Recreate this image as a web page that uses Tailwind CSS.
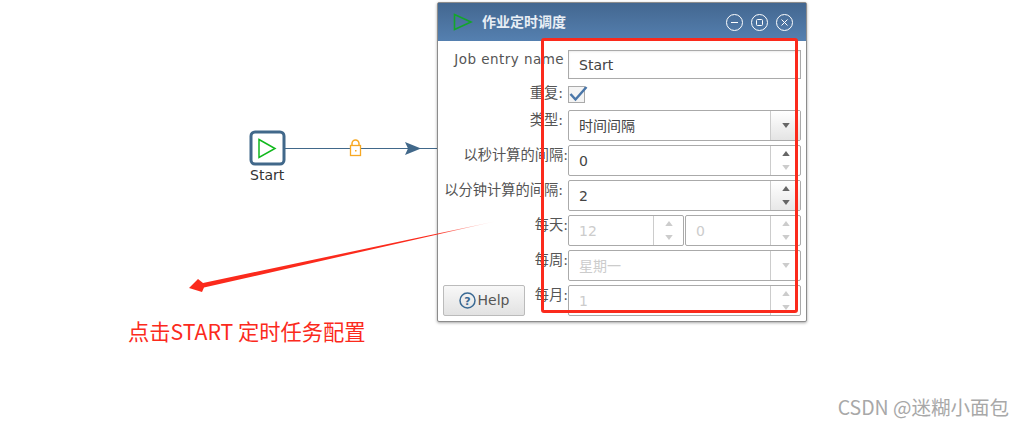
<!DOCTYPE html>
<html lang="en">
<head>
  <meta charset="UTF-8">
  <title>Job schedule</title>
  <script src="https://cdn.jsdelivr.net/npm/@tailwindcss/browser@4"></script>
</head>
<body class="bg-white overflow-hidden">
  <div class="relative w-[1024px] h-[426px] overflow-hidden font-['DejaVu_Sans','Noto_Sans_CJK_SC',sans-serif]">

    <!-- Canvas: start node and hop -->
    <svg class="absolute left-0 top-0" width="1024" height="426" viewBox="0 0 1024 426" fill="none">
      <rect x="251" y="132" width="33" height="32" rx="4" fill="#fff" stroke="#41688a" stroke-width="3"/>
      <path d="M259 139.500 L275 148.500 L259 157.500 Z" stroke="#10b81c" stroke-width="1.500" stroke-linejoin="miter"/>
      <line x1="285" y1="148.500" x2="438" y2="148.500" stroke="#41688a"/>
      <path d="M405 142 L421 148.500 L405 155 L408 148.500 Z" fill="#41688a"/>
      <path d="M352 146 V143.500 A3.500 3.500 0 0 1 359 143.500 V146" stroke="#f7a823" stroke-width="1.500"/>
      <rect x="350.500" y="145.500" width="10" height="10" fill="#fff" stroke="#f7a823" stroke-width="1.300"/>
      <rect x="355" y="150" width="1.500" height="1.500" fill="#f7a823"/>
    </svg>
    <span class="absolute left-[250px] top-[166px] text-[14px] leading-[18px] text-[#333]">Start</span>

    <!-- Dialog window -->
    <div class="absolute left-[437px] top-[2px] w-[370px] h-[320px] bg-white border border-[#8c8c8c] rounded-[2px] shadow-[0_1px_3px_rgba(0,0,0,0.35)]">
      <div class="h-[38px] flex items-center pl-[15px] pr-[13px] bg-gradient-to-b from-[#436790] to-[#5580b0]">
        <svg width="20" height="18" viewBox="0 0 20 18" fill="none"><path d="M1.500 1.500 L18 9 L1.500 16.500 Z" stroke="#13a62a" stroke-width="1.600"/></svg>
        <span class="ml-[9px] text-[14px] font-bold text-[#e8eef5]">作业定时调度</span>
        <div class="ml-auto flex gap-[8px]">
          <svg width="17" height="17" viewBox="0 0 17 17" fill="none" stroke="#fff"><circle cx="8.500" cy="8.500" r="8"/><path d="M5 8.500 H12"/></svg>
          <svg width="17" height="17" viewBox="0 0 17 17" fill="none" stroke="#fff"><circle cx="8.500" cy="8.500" r="8"/><rect x="5.500" y="5.500" width="6" height="6" rx="1"/></svg>
          <svg width="17" height="17" viewBox="0 0 17 17" fill="none" stroke="#fff"><circle cx="8.500" cy="8.500" r="8"/><path d="M5.500 5.500 L11.500 11.500 M11.500 5.500 L5.500 11.500"/></svg>
        </div>
      </div>

      <div class="grid grid-cols-[130px_233px] pt-[9px] text-[14.250px] text-[#555]">
        <!-- Job entry name -->
        <div class="h-[36px] pr-[4px] text-right text-[13.500px] leading-[19px] tracking-[0.45px] whitespace-nowrap">Job entry name</div>
        <div class="h-[29px] mb-[7px] border border-[#aaa] flex items-center pl-[10px] pt-[2px] text-[14px] text-[#444] shadow-[inset_0_1px_2px_rgba(0,0,0,0.08)]">Start</div>

        <!-- Repeat -->
        <div class="h-[24px] pr-[5px] text-right leading-[14px]">重复:</div>
        <div class="h-[24px]">
          <div class="relative w-[17px] h-[17px] border border-[#aaa] bg-[#f4f4f4]">
            <svg class="absolute left-0 -top-[3px]" width="20" height="19" viewBox="0 0 20 19" fill="none"><path d="M1.500 10 L6.500 15.500 L17.500 3" stroke="#4a76a8" stroke-width="2.500"/></svg>
          </div>
        </div>

        <!-- Type -->
        <div class="h-[35px] pr-[5px] text-right leading-[20px]">类型:</div>
        <div class="h-[31px] mb-[4px] border border-[#aaa] rounded-[2px] flex text-[14px] text-[#444]">
          <span class="flex-1 pl-[10px] leading-[30px]">时间间隔</span>
          <span class="w-[30px] border-l border-[#ccc] bg-gradient-to-b from-white to-[#e4e4e4] flex items-center justify-center">
            <svg width="8" height="5" viewBox="0 0 9 6"><path d="M0 0 H9 L4.500 6 Z" fill="#666"/></svg>
          </span>
        </div>

        <!-- Seconds -->
        <div class="h-[35px] text-right leading-[20px] whitespace-nowrap">以秒计算的间隔:</div>
        <div class="h-[31px] mb-[4px] border border-[#aaa] rounded-[2px] flex text-[14px] text-[#444]">
          <span class="flex-1 pl-[10px] leading-[30px]">0</span>
          <span class="w-[30px] border-l border-[#ccc] flex flex-col items-center justify-center gap-[9px]">
            <svg width="8" height="5" viewBox="0 0 9 6"><path d="M0 6 H9 L4.500 0 Z" fill="#666"/></svg>
            <svg width="8" height="5" viewBox="0 0 9 6"><path d="M0 0 H9 L4.500 6 Z" fill="#ccc"/></svg>
          </span>
        </div>

        <!-- Minutes -->
        <div class="h-[35px] pr-[5px] text-right leading-[20px] whitespace-nowrap">以分钟计算的间隔:</div>
        <div class="h-[31px] mb-[4px] border border-[#aaa] rounded-[2px] flex text-[14px] text-[#444]">
          <span class="flex-1 pl-[10px] leading-[30px]">2</span>
          <span class="w-[30px] border-l border-[#ccc] bg-gradient-to-b from-white to-[#e8e8e8] flex flex-col items-center justify-center gap-[9px]">
            <svg width="8" height="5" viewBox="0 0 9 6"><path d="M0 6 H9 L4.500 0 Z" fill="#666"/></svg>
            <svg width="8" height="5" viewBox="0 0 9 6"><path d="M0 0 H9 L4.500 6 Z" fill="#666"/></svg>
          </span>
        </div>

        <!-- Every day -->
        <div class="h-[35px] text-right leading-[20px]">每天:</div>
        <div class="h-[31px] mb-[4px] flex gap-[1px] text-[14px] text-[#ccc]">
          <div class="w-[116px] border border-[#aaa] rounded-[2px] flex">
            <span class="flex-1 pl-[10px] leading-[30px]">12</span>
            <span class="w-[30px] border-l border-[#ccc] flex flex-col items-center justify-center gap-[9px]">
              <svg width="8" height="5" viewBox="0 0 9 6"><path d="M0 6 H9 L4.500 0 Z" fill="#ccc"/></svg>
              <svg width="8" height="5" viewBox="0 0 9 6"><path d="M0 0 H9 L4.500 6 Z" fill="#ccc"/></svg>
            </span>
          </div>
          <div class="flex-1 border border-[#aaa] rounded-[2px] flex">
            <span class="flex-1 pl-[10px] leading-[30px]">0</span>
            <span class="w-[30px] border-l border-[#ccc] flex flex-col items-center justify-center gap-[9px]">
              <svg width="8" height="5" viewBox="0 0 9 6"><path d="M0 6 H9 L4.500 0 Z" fill="#ccc"/></svg>
              <svg width="8" height="5" viewBox="0 0 9 6"><path d="M0 0 H9 L4.500 6 Z" fill="#ccc"/></svg>
            </span>
          </div>
        </div>

        <!-- Every week -->
        <div class="h-[35px] text-right leading-[20px]">每周:</div>
        <div class="h-[31px] mb-[4px] border border-[#aaa] rounded-[2px] flex text-[14px] text-[#ccc]">
          <span class="flex-1 pl-[10px] leading-[30px]">星期一</span>
          <span class="w-[30px] border-l border-[#ccc] flex items-center justify-center">
            <svg width="8" height="5" viewBox="0 0 9 6"><path d="M0 0 H9 L4.500 6 Z" fill="#ccc"/></svg>
          </span>
        </div>

        <!-- Every month, shares its row with the Help button -->
        <div class="h-[31px] flex justify-between pl-[5px]">
          <button class="w-[82px] h-[31px] border border-[#bbb] rounded-[2px] bg-gradient-to-b from-[#f8f8f8] to-[#e2e2e2] flex items-center justify-center gap-[2px] text-[14px] text-[#555]">
            <svg width="17" height="17" viewBox="0 0 17 17" fill="none"><circle cx="8.500" cy="8.500" r="7.500" stroke="#3a6a94" stroke-width="1.500"/><text x="8.500" y="12.500" text-anchor="middle" font-size="11" font-weight="700" fill="#3a6a94">?</text></svg>
            Help
          </button>
          <span class="leading-[20px]">每月:</span>
        </div>
        <div class="h-[31px] border border-[#aaa] rounded-[2px] flex text-[14px] text-[#ccc]">
          <span class="flex-1 pl-[10px] leading-[30px]">1</span>
          <span class="w-[30px] border-l border-[#ccc] flex flex-col items-center justify-center gap-[9px]">
            <svg width="8" height="5" viewBox="0 0 9 6"><path d="M0 6 H9 L4.500 0 Z" fill="#ccc"/></svg>
            <svg width="8" height="5" viewBox="0 0 9 6"><path d="M0 0 H9 L4.500 6 Z" fill="#ccc"/></svg>
          </span>
        </div>
      </div>
    </div>

    <!-- Annotations drawn on top of the screenshot -->
    <div class="absolute left-[541px] top-[38px] w-[257px] h-[275px] border-[3.500px] border-[#fb2a1c] rounded-[3px]"></div>
    <svg class="absolute left-0 top-0" width="1024" height="426" viewBox="0 0 1024 426">
      <defs>
        <linearGradient id="arrowFade" gradientUnits="userSpaceOnUse" x1="497" y1="221" x2="190" y2="288">
          <stop offset="0" stop-color="#fb2a1c" stop-opacity="0"/>
          <stop offset="0.2" stop-color="#fb2a1c"/>
          <stop offset="1" stop-color="#fb2a1c"/>
        </linearGradient>
      </defs>
      <path d="M497 221 L203 283 L198 279 L189 288 L202 292 L204 287.500 Z" fill="url(#arrowFade)"/>
    </svg>
    <span class="absolute left-[128px] top-[317px] text-[21.250px] leading-[28px] text-[#fb2a1c] font-['Noto_Sans_CJK_SC',sans-serif] whitespace-nowrap">点击START 定时任务配置</span>
    <span class="absolute right-[15px] top-[394px] text-[19.500px] leading-[26px] text-[#a8a8a8] font-['Noto_Sans_CJK_SC',sans-serif] whitespace-nowrap">CSDN @迷糊小面包</span>
  </div>
</body>
</html>
